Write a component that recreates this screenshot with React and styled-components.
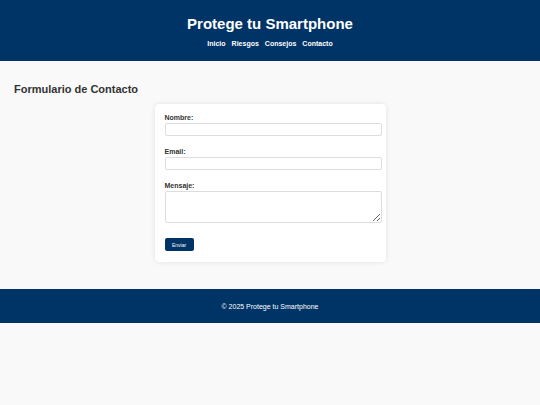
import React from "react";
import styled, { createGlobalStyle } from "styled-components";

const GlobalStyle = createGlobalStyle`
  html, body {
    margin: 0;
    padding: 0;
    background: #f9f9f9;
    font-family: "Liberation Sans", Arial, sans-serif;
    color: #333;
  }
  * { box-sizing: border-box; }
`;

const Header = styled.header`
  background: #003366;
  color: #fff;
  height: 61px;
  display: flex;
  flex-direction: column;
  align-items: center;
  padding-top: 15px;
`;

const Title = styled.h1`
  margin: 0;
  font-size: 15px;
  font-weight: bold;
  line-height: 18px;
`;

const Nav = styled.nav`
  display: flex;
  gap: 6px;
  margin-top: 6px;
`;

const NavLink = styled.a`
  color: #fff;
  font-size: 7px;
  font-weight: bold;
  text-decoration: none;
  line-height: 9px;
`;

const Main = styled.main`
  padding: 22px 14px 27px;
`;

const Heading = styled.h2`
  margin: 0 0 8px;
  font-size: 11px;
  line-height: 13px;
  font-weight: bold;
  color: #333;
`;

const Card = styled.form`
  width: 231px;
  height: 158px;
  margin: 0 auto;
  background: #fff;
  border-radius: 4px;
  box-shadow: 0 0 5px rgba(0, 0, 0, 0.1);
  padding: 9px 4px 0 10px;
`;

const Field = styled.div`
  display: flex;
  flex-direction: column;
  margin-bottom: 11px;
`;

const Label = styled.label`
  font-size: 7px;
  font-weight: bold;
  line-height: 9px;
  margin-bottom: 1px;
  color: #333;
`;

const Input = styled.input`
  height: 13px;
  border: 1px solid #ddd;
  border-radius: 2px;
  padding: 0 3px;
  font-size: 7px;
  width: 100%;
  margin: 0;
`;

const TextArea = styled.textarea`
  height: 32px;
  border: 1px solid #ddd;
  border-radius: 2px;
  font-size: 7px;
  width: 100%;
  resize: vertical;
  margin: 0;
`;

const Button = styled.button`
  display: block;
  background: #003366;
  color: #fff;
  border: none;
  border-radius: 2px;
  width: 29px;
  height: 13px;
  font-size: 5px;
  font-family: "Liberation Sans", Arial, sans-serif;
  padding: 0;
  margin-top: 15px;
`;

const Footer = styled.footer`
  background: #003366;
  color: #fff;
  height: 34px;
  display: flex;
  align-items: center;
  justify-content: center;
  font-size: 7px;
`;

export default function App() {
  return (
    <>
      <GlobalStyle />
      <Header>
        <Title>Protege tu Smartphone</Title>
        <Nav>
          <NavLink href="#">Inicio</NavLink>
          <NavLink href="#">Riesgos</NavLink>
          <NavLink href="#">Consejos</NavLink>
          <NavLink href="#">Contacto</NavLink>
        </Nav>
      </Header>
      <Main>
        <Heading>Formulario de Contacto</Heading>
        <Card onSubmit={(e) => e.preventDefault()}>
          <Field>
            <Label>Nombre:</Label>
            <Input type="text" />
          </Field>
          <Field>
            <Label>Email:</Label>
            <Input type="email" />
          </Field>
          <Field>
            <Label>Mensaje:</Label>
            <TextArea />
          </Field>
          <Button type="submit">Enviar</Button>
        </Card>
      </Main>
      <Footer>© 2025 Protege tu Smartphone</Footer>
    </>
  );
}
